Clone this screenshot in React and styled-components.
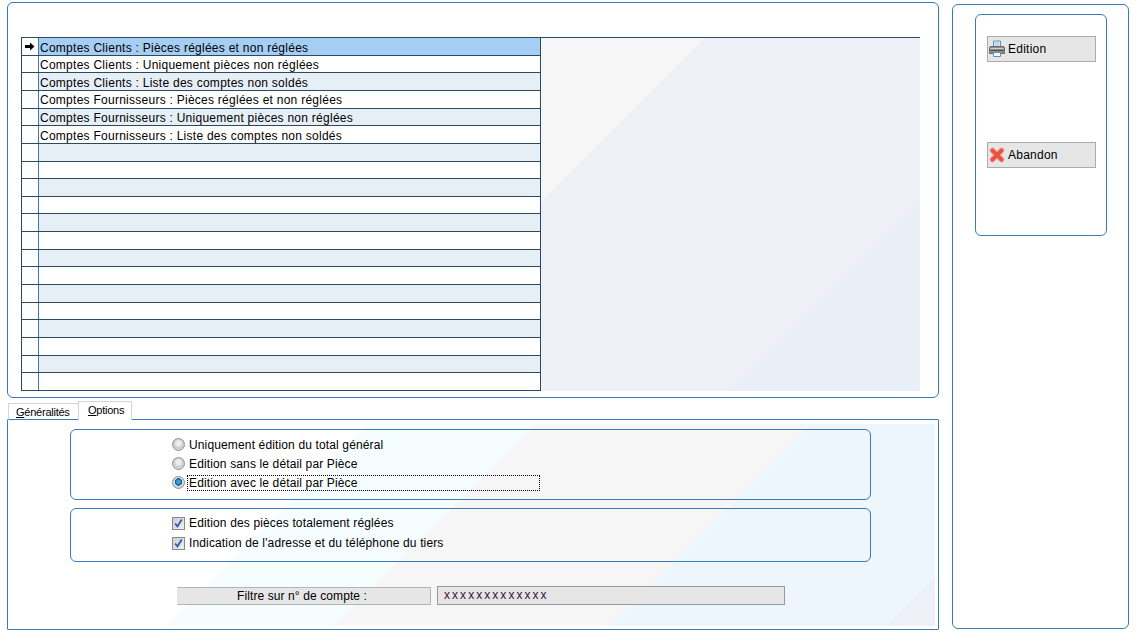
import React from 'react';
import styled, { createGlobalStyle } from 'styled-components';

const BLUE = '#3a7ab5';
const DARK = '#2b4a5f';

const GlobalStyle = createGlobalStyle`
  html, body {
    margin: 0;
    padding: 0;
    background: #ffffff;
  }
  body {
    font-family: 'Liberation Sans', Arial, sans-serif;
    font-size: 12px;
    color: #000000;
  }
  * {
    box-sizing: border-box;
  }
`;

const Page = styled.div`
  display: flex;
  align-items: flex-start;
  gap: 13px;
  width: 1136px;
  height: 632px;
  padding: 2px 0 0 7px;
  overflow: hidden;
`;

const LeftColumn = styled.div`
  display: flex;
  flex-direction: column;
  width: 932px;
`;

const ListPanel = styled.section`
  height: 396px;
  padding: 34px 0 0 13px;
  border: 1px solid ${BLUE};
  border-radius: 6px;
`;

const ListGrid = styled.div`
  display: flex;
  width: 899px;
  height: 354px;
  border-top: 1px solid ${DARK};
`;

const Rows = styled.div`
  display: grid;
  grid-template-rows: repeat(20, minmax(0, 1fr));
  width: 520px;
  height: 353px;
  border-left: 1px solid ${DARK};
  border-right: 1px solid ${DARK};
`;

const Row = styled.div`
  display: grid;
  grid-template-columns: 17px 1fr;
  grid-template-rows: minmax(0, 1fr);
  min-height: 0;
  border-bottom: 1px solid ${DARK};
`;

const Indicator = styled.div`
  display: flex;
  align-items: center;
  justify-content: center;
  background: #ffffff;
  border-right: 1px solid ${BLUE};
`;

const Cell = styled.div`
  padding: 1.52px 0 0 1px;
  line-height: 16px;
  letter-spacing: 0.26px;
  white-space: nowrap;
  overflow: hidden;
  background: ${props => (props.$selected ? '#a6cef5' : props.$odd ? '#e6eef6' : '#ffffff')};
`;

const GridBackdrop = styled.div`
  flex: 1;
  height: 353px;
  background: linear-gradient(135deg, #f6f6f6 0 116px, #eeeff7 116px 383px, #e8eff7 383px);
`;

const TabStrip = styled.div`
  display: flex;
  align-items: flex-end;
  height: 19px;
  margin: 3px 0 -1px 1px;
  position: relative;
  z-index: 1;
`;

const Tab = styled.div`
  height: ${props => (props.$active ? '19px' : '17px')};
  padding: ${props => (props.$active ? '1px 8px 0 9px' : '1px 7px 0 7px')};
  width: ${props => (props.$active ? '54px' : '70px')};
  font-size: 11px;
  letter-spacing: -0.24px;
  line-height: 14px;
  white-space: nowrap;
  background: #ffffff;
  border: 1px solid #d4d4d4;
  border-bottom: ${props => (props.$active ? 'none' : `1px solid ${BLUE}`)};
  border-right: ${props => (props.$active ? '1px solid #d4d4d4' : 'none')};
`;

const TabPanel = styled.section`
  height: 211px;
  padding: 4px 3px 3px 0;
  border: 1px solid ${BLUE};
  border-radius: 1px;
`;

const OptionsCanvas = styled.div`
  display: flex;
  flex-direction: column;
  gap: 8px;
  height: 202px;
  padding: 5px 0 0 62px;
  background: linear-gradient(
    135deg,
    #ffffff 0 254px,
    #f5fdfe 254px 373px,
    #f6f6f6 373px 569px,
    #eef6fd 569px 765px,
    #efeff8 765px
  );
`;

const OptionGroup = styled.div`
  display: flex;
  flex-direction: column;
  width: 801px;
  height: ${props => props.$height}px;
  padding: ${props => props.$top}px 0 0 101px;
  border: 1px solid ${BLUE};
  border-radius: 6px;
`;

const OptionRow = styled.div`
  display: flex;
  align-items: center;
  height: ${props => props.$height}px;
`;

const RadioMark = styled.span`
  flex: none;
  width: 13px;
  height: 13px;
  margin-right: 2px;
  border-radius: 50%;
  border: 1px solid #8f8f8f;
  background: ${props =>
    props.$checked
      ? 'radial-gradient(circle at 50% 45%, #3fa0da 0 1.5px, #06558f 3.5px, #e4e4e4 4px, #c8c8c8 6px)'
      : 'radial-gradient(circle at 50% 40%, #eeeeee 0 2px, #c6c6c6 5px, #dedede 6px)'};
`;

const CheckMark = styled.span`
  flex: none;
  display: flex;
  align-items: center;
  justify-content: center;
  width: 13px;
  height: 13px;
  margin-right: 2px;
  border: 1px solid #8b8b8b;
  background: linear-gradient(135deg, #c9cdd6, #eef0f4);
`;

const OptionText = styled.span`
  display: block;
  width: 353px;
  height: 16px;
  padding-left: 1px;
  line-height: 14px;
  letter-spacing: 0.14px;
  white-space: nowrap;
  border: 1px dotted ${props => (props.$focused ? '#000000' : 'transparent')};
`;

const FilterRow = styled.div`
  display: flex;
  align-items: center;
  gap: 6px;
  margin: 16px 0 0 107px;
`;

const FilterLabel = styled.div`
  width: 254px;
  height: 18px;
  padding-right: 4px;
  line-height: 16px;
  text-align: center;
  letter-spacing: 0.1px;
  background: #e6e6e6;
  border: 1px solid #b4b4b4;
  border-left-color: #e6e6e6;
`;

const FilterValue = styled.div`
  width: 348px;
  height: 19px;
  padding-left: 6px;
  line-height: 17px;
  letter-spacing: 2.05px;
  color: #3a1238;
  background: #e6e6e6;
  border: 1px solid #999999;
`;

const SidePanel = styled.aside`
  width: 177px;
  height: 625px;
  margin-top: 2px;
  padding: 9px 0 0 22px;
  border: 1px solid ${BLUE};
  border-radius: 6px;
`;

const ActionBox = styled.div`
  display: flex;
  flex-direction: column;
  gap: 80px;
  width: 132px;
  height: 222px;
  padding: 21px 0 0 11px;
  border: 1px solid ${BLUE};
  border-radius: 6px;
`;

const ActionButton = styled.div`
  display: flex;
  align-items: center;
  gap: 3px;
  width: 109px;
  height: 26px;
  padding-left: 1px;
  letter-spacing: 0.24px;
  background: #e6e6e6;
  border: 1px solid #ababab;
`;

const ArrowIcon = () => (
  <svg width="10" height="9" viewBox="0 0 10 9">
    <path d="M0 3h5V0.5L9.5 4.5 5 8.500V6H0z" fill="#000000" />
  </svg>
);

const PrinterIcon = () => (
  <svg width="16" height="18" viewBox="0 0 16 18">
    <path d="M4.500 1h7v6h-7z" fill="#e8f3fb" stroke="#5f93bc" />
    <path d="M5.500 3h5M5.500 5h5" stroke="#9dbfd9" />
    <path d="M2 6.500h12a1.500 1.500 0 0 1 1.500 1.500v5.500h-15V8A1.500 1.500 0 0 1 2 6.500z" fill="#8c8c8c" stroke="#6c6c6c" />
    <path d="M1.500 8.500h13" stroke="#d0d0d0" />
    <path d="M1.500 10.500h13" stroke="#525252" />
    <path d="M4.500 12.500h7v4h-7z" fill="#f4f8fb" stroke="#5f93bc" />
  </svg>
);

const CancelIcon = () => (
  <svg width="16" height="16" viewBox="0 0 16 16">
    <path d="M3.500 3.500l9 9M12.500 3.500l-9 9" stroke="#e89a8a" strokeWidth="5.500" strokeLinecap="round" />
    <path d="M3.500 3.500l9 9M12.500 3.500l-9 9" stroke="#e9523c" strokeWidth="3.600" strokeLinecap="round" />
  </svg>
);

const TickIcon = () => (
  <svg width="11" height="11" viewBox="0 0 11 11">
    <path d="M2.200 5.500l2.200 3L8.800 1.500" fill="none" stroke="#3558a8" strokeWidth="1.800" />
  </svg>
);

const accounts = [
  'Comptes Clients : Pièces réglées et non réglées',
  'Comptes Clients : Uniquement pièces non réglées',
  'Comptes Clients : Liste des comptes non soldés',
  'Comptes Fournisseurs : Pièces réglées et non réglées',
  'Comptes Fournisseurs : Uniquement pièces non réglées',
  'Comptes Fournisseurs : Liste des comptes non soldés',
];

const rows = Array.from({ length: 20 }, (_, i) => accounts[i] || '');

const radios = [
  'Uniquement édition du total général',
  'Edition sans le détail par Pièce',
  'Edition avec le détail par Pièce',
];

const checks = [
  'Edition des pièces totalement réglées',
  "Indication de l'adresse et du téléphone du tiers",
];

export default function App() {
  return (
    <Page>
      <GlobalStyle />
      <LeftColumn>
        <ListPanel>
          <ListGrid>
            <Rows>
              {rows.map((label, i) => (
                <Row key={i}>
                  <Indicator>{i === 0 && <ArrowIcon />}</Indicator>
                  <Cell $selected={i === 0} $odd={i % 2 === 0}>
                    {label}
                  </Cell>
                </Row>
              ))}
            </Rows>
            <GridBackdrop />
          </ListGrid>
        </ListPanel>

        <TabStrip>
          <Tab>
            <u>G</u>énéralités
          </Tab>
          <Tab $active>
            <u>O</u>ptions
          </Tab>
        </TabStrip>

        <TabPanel>
          <OptionsCanvas>
            <OptionGroup $height={71} $top={5}>
              {radios.map((label, i) => (
                <OptionRow key={label} $height={19}>
                  <RadioMark $checked={i === 2} />
                  <OptionText $focused={i === 2}>{label}</OptionText>
                </OptionRow>
              ))}
            </OptionGroup>
            <OptionGroup $height={54} $top={4}>
              {checks.map(label => (
                <OptionRow key={label} $height={20}>
                  <CheckMark>
                    <TickIcon />
                  </CheckMark>
                  <OptionText>{label}</OptionText>
                </OptionRow>
              ))}
            </OptionGroup>
            <FilterRow>
              <FilterLabel>Filtre sur n° de compte :</FilterLabel>
              <FilterValue>xxxxxxxxxxxxx</FilterValue>
            </FilterRow>
          </OptionsCanvas>
        </TabPanel>
      </LeftColumn>

      <SidePanel>
        <ActionBox>
          <ActionButton>
            <PrinterIcon />
            Edition
          </ActionButton>
          <ActionButton>
            <CancelIcon />
            Abandon
          </ActionButton>
        </ActionBox>
      </SidePanel>
    </Page>
  );
}
